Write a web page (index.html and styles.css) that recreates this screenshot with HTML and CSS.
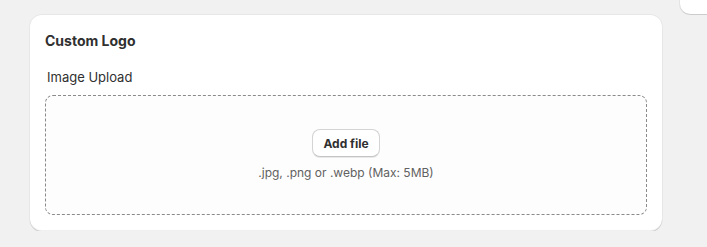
FILE: index.html
```html
<!DOCTYPE html>
<html>
<head>
<meta charset="utf-8">
<link rel="stylesheet" href="styles.css">
</head>
<body>
<div class="corner-card"></div>
<div class="page">
  <section class="card">
    <h2 class="card-title">Custom Logo</h2>
    <div class="field">
      <label class="field-label">Image Upload</label>
      <div class="dropzone">
        <button class="btn" type="button">Add file</button>
        <p class="hint">.jpg, .png or .webp (Max: 5MB)</p>
      </div>
    </div>
  </section>
</div>
</body>
</html>
```
FILE: styles.css
```css
html, body {
  margin: 0;
  padding: 0;
  background: #f1f1f1;
  font-family: Inter, "Noto Sans", sans-serif;
  color: #303030;
  overflow: hidden;
}
.corner-card {
  position: absolute;
  left: 680px;
  top: -20px;
  width: 60px;
  height: 34px;
  background: #fff;
  border-radius: 10px;
  box-shadow: 0 1px 0 rgba(0,0,0,0.1), 0 0 0 1px rgba(0,0,0,0.05);
}
.page {
  padding: 15px 0 0 30px;
}
.card {
  width: 632px;
  box-sizing: border-box;
  background: #fff;
  border-radius: 12px;
  padding: 16px 15px 16px 15px;
  box-shadow: 0 1px 0 rgba(0,0,0,0.12), inset 0 -1px 0 rgba(0,0,0,0.06), 0 0 0 1px rgba(0,0,0,0.04);
}
.card-title {
  margin: 0;
  font-size: 14px;
  line-height: 20px;
  font-weight: 650;
  color: #303030;
}
.field {
  margin-top: 16px;
}
.field-label {
  display: block;
  padding-left: 2px;
  font-size: 13px;
  line-height: 20px;
  color: #303030;
}
.dropzone {
  margin-top: 8px;
  height: 120px;
  box-sizing: border-box;
  border: 1px dashed #8a8a8a;
  border-radius: 8px;
  background: #fdfdfd;
  display: flex;
  flex-direction: column;
  align-items: center;
  justify-content: center;
  padding-top: 2px;
}
.btn {
  font-family: inherit;
  font-size: 12px;
  font-weight: 650;
  color: #303030;
  background: #fff;
  border: 1px solid #d4d4d4;
  border-bottom-color: #c4c4c4;
  border-radius: 8px;
  height: 28px;
  padding: 0 10px;
  box-shadow: 0 1px 0 rgba(0,0,0,0.08);
}
.hint {
  margin: 6px 0 0;
  font-size: 12px;
  line-height: 20px;
  color: #616161;
}
```
